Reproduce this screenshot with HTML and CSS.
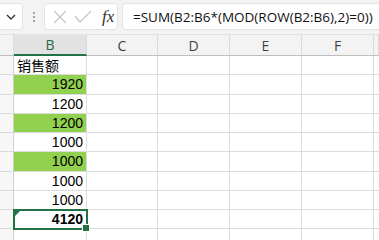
FILE: index.html
```html
<!DOCTYPE html>
<html lang="zh">
<head>
  <meta charset="UTF-8">
  <title>Sheet</title>
  <link rel="stylesheet" href="styles.css">
</head>
<body>

<div class="toolbar">
  <div class="namebox">
    <svg width="12" height="8" viewBox="0 0 12 8"><path d="M2 2 L6 6 L10 2" fill="none" stroke="#333" stroke-width="1.3"/></svg>
  </div>
  <div class="grip"><span></span><span></span><span></span></div>
  <div class="fnbox">
    <svg width="14" height="14" viewBox="0 0 14 14"><path d="M1 1 L13 13 M13 1 L1 13" stroke="#c4c4c4" stroke-width="1.2"/></svg>
    <svg width="18" height="14" viewBox="0 0 18 14"><path d="M1 6 L6 12 L17 1" fill="none" stroke="#c4c4c4" stroke-width="1.2"/></svg>
    <span class="fx">fx</span>
  </div>
  <div class="formula">=SUM(B2:B6*(MOD(ROW(B2:B6),2)=0))</div>
</div>

<div class="sheet">
  <div class="corner"></div>
  <div class="colhead active">B</div>
  <div class="colhead">C</div>
  <div class="colhead">D</div>
  <div class="colhead">E</div>
  <div class="colhead">F</div>
  <div class="colhead"></div>

  <div class="rowhead"></div>
  <div class="cell text">销售额</div>
  <div class="cell"></div><div class="cell"></div><div class="cell"></div><div class="cell"></div><div class="cell"></div>

  <div class="rowhead"></div>
  <div class="cell num green">1920</div>
  <div class="cell"></div><div class="cell"></div><div class="cell"></div><div class="cell"></div><div class="cell"></div>

  <div class="rowhead"></div>
  <div class="cell num">1200</div>
  <div class="cell"></div><div class="cell"></div><div class="cell"></div><div class="cell"></div><div class="cell"></div>

  <div class="rowhead"></div>
  <div class="cell num green">1200</div>
  <div class="cell"></div><div class="cell"></div><div class="cell"></div><div class="cell"></div><div class="cell"></div>

  <div class="rowhead"></div>
  <div class="cell num">1000</div>
  <div class="cell"></div><div class="cell"></div><div class="cell"></div><div class="cell"></div><div class="cell"></div>

  <div class="rowhead"></div>
  <div class="cell num green">1000</div>
  <div class="cell"></div><div class="cell"></div><div class="cell"></div><div class="cell"></div><div class="cell"></div>

  <div class="rowhead"></div>
  <div class="cell num">1000</div>
  <div class="cell"></div><div class="cell"></div><div class="cell"></div><div class="cell"></div><div class="cell"></div>

  <div class="rowhead"></div>
  <div class="cell num">1000</div>
  <div class="cell"></div><div class="cell"></div><div class="cell"></div><div class="cell"></div><div class="cell"></div>

  <div class="rowhead"></div>
  <div class="cell num total selected">4120<i class="flag"></i><i class="handle"></i></div>
  <div class="cell"></div><div class="cell"></div><div class="cell"></div><div class="cell"></div><div class="cell"></div>

  <div class="rowhead"></div>
  <div class="cell"></div>
  <div class="cell"></div><div class="cell"></div><div class="cell"></div><div class="cell"></div><div class="cell"></div>
</div>

</body>
</html>
```

FILE: styles.css
```css
/* Page */
body {
  margin: 0;
  width: 379px;
  height: 240px;
  overflow: hidden;
  background: #fff;
  font-family: "Liberation Sans", "Noto Sans CJK SC", sans-serif;
  color: #000;
}
/* Formula bar */
.toolbar {
  display: flex;
  align-items: center;
  height: 35px;
  padding-bottom: 1px;
  background: #f3f3f3;
  border-bottom: 1px solid #e2e2e2;
  box-sizing: border-box;
}
.namebox,
.fnbox,
.formula {
  height: 27px;
  background: #fff;
  border: 1px solid #e3e3e3;
  border-radius: 4px;
  box-sizing: border-box;
  display: flex;
  align-items: center;
}
.namebox {
  width: 23px;
  border-left: none;
  border-radius: 0 4px 4px 0;
  justify-content: flex-end;
  padding-right: 5px;
}
.grip {
  width: 21px;
  display: flex;
  flex-direction: column;
  align-items: center;
  gap: 2px;
}
.grip span {
  width: 2px;
  height: 2px;
  background: #a5a5a5;
}
.fnbox {
  width: 74px;
  gap: 7px;
  padding-left: 8px;
}
.fx {
  font-family: "Liberation Serif", serif;
  font-style: italic;
  font-size: 17px;
  color: #333;
  margin-left: 3px;
}
.formula {
  flex: 1;
  min-width: 0;
  margin-left: 4px;
  border-right: none;
  border-radius: 4px 0 0 4px;
  padding-left: 10px;
  font-family: "Open Sans", sans-serif;
  font-size: 13.5px;
  color: #111;
  white-space: nowrap;
  overflow: hidden;
}
/* Grid */
.sheet {
  display: grid;
  grid-template-columns: 14px 73px 71px 72px 72px 72px 5px;
  grid-template-rows: 21px repeat(10, 19.25px);
  height: 205px;
  overflow: hidden;
}
.corner,
.colhead {
  background: #f3f3f3;
  border-right: 1px solid #dadada;
  border-bottom: 1px solid #bdbdbd;
  box-sizing: border-box;
}
.colhead {
  font-family: "Open Sans", sans-serif;
  font-size: 14px;
  color: #444;
  display: flex;
  align-items: center;
  justify-content: center;
}
.colhead.active {
  background: #e2e2e2;
  color: #1e6b3e;
  border-bottom: 2px solid #217346;
}
.rowhead {
  background: #f7f7f7;
  border-right: 1px solid #d0d0d0;
  border-bottom: 1px solid #dadada;
  box-sizing: border-box;
}
.cell {
  border-right: 1px solid #dcdcdc;
  border-bottom: 1px solid #dcdcdc;
  box-sizing: border-box;
  font-size: 14px;
  display: flex;
  align-items: center;
  padding: 0 3px;
  position: relative;
}
.cell.text {
  font-family: "Noto Sans CJK SC", sans-serif;
  font-size: 14px;
}
.cell.num {
  justify-content: flex-end;
}
.cell.green {
  background: #92d050;
}
.cell.total {
  font-weight: bold;
}
.selected {
  outline: 2px solid #217346;
  outline-offset: -1px;
  z-index: 1;
}
.flag {
  position: absolute;
  left: 1px;
  top: 1px;
  width: 0;
  height: 0;
  border-top: 5px solid #217346;
  border-right: 5px solid transparent;
}
.handle {
  position: absolute;
  right: -4px;
  bottom: -4px;
  width: 6px;
  height: 6px;
  background: #217346;
  border: 1px solid #fff;
}
```
